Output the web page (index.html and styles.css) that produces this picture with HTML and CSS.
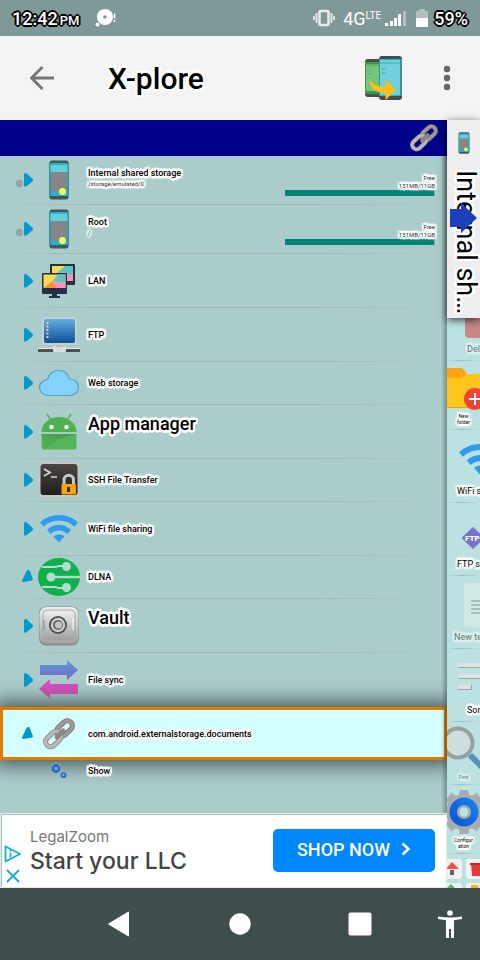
FILE: index.html
```html
<!DOCTYPE html>
<html lang="en">
<head>
<meta charset="utf-8">
<meta name="viewport" content="width=device-width, initial-scale=1">
<title>X-plore</title>
<link rel="stylesheet" href="styles.css">
</head>
<body>
<svg width="0" height="0" class="defs" aria-hidden="true">
  <defs>
    <linearGradient id="metal" x1="0" y1="0" x2="1" y2="1"><stop offset="0" stop-color="#d6d6d6"/><stop offset=".5" stop-color="#8a8482"/><stop offset="1" stop-color="#c4c0be"/></linearGradient>
    <linearGradient id="screen" x1="0" y1="0" x2="0" y2="1"><stop offset="0" stop-color="#62aee3"/><stop offset="1" stop-color="#0d4f97"/></linearGradient>
    <linearGradient id="term" x1="0" y1="0" x2="0" y2="1"><stop offset="0" stop-color="#4b4643"/><stop offset="1" stop-color="#1f1c1b"/></linearGradient>
    <linearGradient id="safe" x1="0" y1="0" x2="0" y2="1"><stop offset="0" stop-color="#f0f0f0"/><stop offset="1" stop-color="#9d9d9d"/></linearGradient>
    <linearGradient id="syncA" x1="0" y1="0" x2="0" y2="1"><stop offset="0" stop-color="#5b9be0"/><stop offset="1" stop-color="#7668bd"/></linearGradient>
    <linearGradient id="syncB" x1="0" y1="0" x2="0" y2="1"><stop offset="0" stop-color="#e445d4"/><stop offset="1" stop-color="#a9598f"/></linearGradient>
    <linearGradient id="ring" x1="0" y1="1" x2="1" y2="0"><stop offset="0" stop-color="#0b4fd0"/><stop offset="1" stop-color="#1b86f5"/></linearGradient>
    <symbol id="phone" viewBox="0 0 20 40">
      <rect x=".5" y=".5" width="19" height="39" rx="2.5" fill="#4a5355"/>
      <rect x="0" y="3" width="20" height="33" fill="#3e8e9a"/>
      <rect x="1.500" y="3" width="17" height="33" fill="#1fb4d2"/>
      <rect x="1.500" y="5" width="17" height="7" fill="#62cfdc"/>
      <rect x="2" y="12" width="16" height="20" fill="#868686"/>
      <circle cx="13.500" cy="31.500" r="3.500" fill="#eaff5e"/>
    </symbol>
    <symbol id="chain" viewBox="0 0 34 34">
      <g fill="none" stroke-linecap="round">
        <rect x="-9" y="-5" width="18" height="10" rx="5" transform="translate(22.500 11.500) rotate(-43)" stroke="#77716f" stroke-width="5"/>
        <rect x="-9" y="-5" width="18" height="10" rx="5" transform="translate(22.500 11.500) rotate(-43)" stroke="#9f9a98" stroke-width="3.400"/>
        <rect x="-9" y="-5" width="18" height="10" rx="5" transform="translate(11.500 22) rotate(-43)" stroke="#8b8785" stroke-width="5"/>
        <rect x="-9" y="-5" width="18" height="10" rx="5" transform="translate(11.500 22) rotate(-43)" stroke="#bcb8b6" stroke-width="3.400"/>
        <path d="M15 20l6-6" stroke="#8b8583" stroke-width="5"/>
      </g>
    </symbol>
    <symbol id="wifi" viewBox="0 0 38 28">
      <path d="M19 0C11.500 0 5 2.800 0 7.500l3.500 4C7.800 7.600 13 5.500 19 5.500s11.200 2.100 15.500 6l3.500-4C33 2.800 26.500 0 19 0zM19 10c-4.800 0-9 1.900-12 5l3.600 4c2.200-2.200 5-3.500 8.400-3.500s6.200 1.300 8.400 3.500l3.600-4c-3-3.100-7.200-5-12-5zM19 19.500c-2.100 0-4 .9-5.300 2.300L19 27.500l5.300-5.700c-1.300-1.400-3.200-2.300-5.300-2.300z" fill="#2e9bf3"/>
    </symbol>
    <symbol id="closed" viewBox="0 0 24 22">
      <path d="M10.800 4.200Q11.500 3.500 12.500 4.300L18.500 9.700Q19.600 11 18.500 12.200L12.500 17.200Q11.500 18 10.500 17.500Q10 17 10 16V6Q10 5 10.800 4.200z" fill="#0399cf"/>
    </symbol>
    <symbol id="open" viewBox="0 0 24 22">
      <path d="M12.500 5Q13.800 3.300 15.500 4.200L18.800 13Q19 14 18 14.400L9.500 16Q8 16 8 14.500z" fill="#0399cf"/>
    </symbol>
  </defs>
</svg>

<header class="status">
  <span class="clock">12:42<small>PM</small></span>
  <svg class="note" width="22" height="20" viewBox="0 0 22 20"><circle cx="10" cy="9" r="8" fill="#fff"/><circle cx="10" cy="9" r="1.800" fill="#7f9998"/><circle cx="2.500" cy="16.500" r="2" fill="#fff"/><path d="M19.500 5.500v5M19.500 12v2" stroke="#fff" stroke-width="1.500"/></svg>
  <svg class="vibrate" width="22" height="18" viewBox="0 0 22 18"><rect x="6.500" y="2" width="9" height="14" rx="1" fill="none" stroke="#e6ebeb" stroke-width="2.600"/><path d="M3.500 4v10M18.500 4v10M1 7v4M21 7v4" stroke="#e6ebeb" stroke-width="1.800"/></svg>
  <span class="net">4G<sup>LTE</sup></span>
  <svg class="signal" width="22" height="16" viewBox="0 0 22 16"><path d="M0 13h3v3H0zM5 11h3v5H5zM9 8h3v8H9zM13 4h3v12h-3z" fill="#fff"/><path d="M18 1h3v15h-3z" fill="#b1c0bf"/></svg>
  <svg class="battery" width="12" height="18" viewBox="0 0 12 18"><path d="M3 0h6v2h3v7H0V2h3z" fill="#b1c0bf"/><path d="M0 9h12v9H0z" fill="#fff"/></svg>
  <span class="percent">59%</span>
</header>

<div class="toolbar">
  <button class="plain back" aria-label="Back"><svg width="24" height="24" viewBox="0 0 24 24"><path d="M24 12H2M12.500 1L1.500 12l11 11" fill="none" stroke="#757575" stroke-width="2.800"/></svg></button>
  <h1>X-plore</h1>
  <button class="plain" aria-label="Switch pane">
    <svg width="38" height="44" viewBox="0 0 38 44"><rect x="0" y="3" width="22" height="38" rx="3" fill="#4b4f50"/><rect x="0" y="6" width="20" height="32" fill="#3c9a47"/><rect x="1" y="8" width="18" height="27" fill="#74c578"/><path d="M1 9h18" stroke="#3faa4b"/><rect x="14" y="0" width="23" height="44" rx="3" fill="#484e50"/><rect x="14" y="3" width="23" height="37" fill="#3e8f9d"/><rect x="15" y="3" width="20" height="37" fill="#20b3cd"/><rect x="15" y="4" width="20" height="35" fill="#6fd1dc"/><path d="M15 7h20" stroke="#27b6cf"/><path d="M2 14h2m1 0h1M2 18h4M17 13h3M17 17h3" stroke="#5aa" stroke-width="1.500"/><path d="M4.500 22c2 6 7 9.500 16 8.500v-7L31 34 20.500 44v-7C10 37 4 31.500 4.500 22z" fill="#ffbf14"/></svg>
  </button>
  <button class="plain more" aria-label="More options"><svg width="8" height="26" viewBox="0 0 8 26"><g fill="#666"><circle cx="4" cy="4" r="3.200"/><circle cx="4" cy="13" r="3.200"/><circle cx="4" cy="22" r="3.200"/></g></svg></button>
</div>

<main>
  <section class="pane">
    <div class="path"><svg width="30" height="30"><use href="#chain"/></svg></div>
    <ul class="list">
      <li class="row h49">
        <svg class="toggle" width="24" height="22"><circle cx="5.500" cy="14.500" r="3.700" fill="#97a5a4"/><use href="#closed"/></svg>
        <svg class="icon" width="42" height="40"><use href="#phone" x="11" width="20" height="40"/></svg>
        <div class="text"><b>Internal shared storage</b><small>/storage/emulated/0</small></div>
        <div class="space"><span>Free<br>151MB/11GB</span><div class="bar"><div class="fill" style="width:99%"></div></div></div>
      </li>
      <li class="row h49">
        <svg class="toggle" width="24" height="22"><circle cx="5.500" cy="14.500" r="3.700" fill="#97a5a4"/><use href="#closed"/></svg>
        <svg class="icon" width="42" height="40"><use href="#phone" x="11" width="20" height="40"/></svg>
        <div class="text"><b>Root</b><small>/</small></div>
        <div class="space"><span>Free<br>151MB/11GB</span><div class="bar"><div class="fill" style="width:99%"></div></div></div>
      </li>
      <li class="row">
        <svg class="toggle" width="24" height="22"><use href="#closed"/></svg>
        <svg class="icon" width="42" height="36" viewBox="0 0 42 36"><rect x="12" y="1" width="25" height="21" rx="1" fill="#22313f"/><path d="M14 3h21v13H14z" fill="#5fc4c6"/><path d="M14 3h13L14 14z" fill="#fbda51"/><path d="M24 9l11 3v6H24z" fill="#fd8fc4"/><rect x="4" y="10" width="25" height="21" rx="1" fill="#22304a"/><path d="M5.500 11.500h22V25h-22z" fill="#fbda51"/><path d="M20 11.500h7.500V20L14 18.500z" fill="#5fc4c6"/><path d="M14 18.500l13.500 1.500v5H19z" fill="#fd8fc4"/><path d="M14 18.500L19 25H5.500z" fill="#fb8c35"/><path d="M14 30h5v3h3v2H11v-2h3z" fill="#22304a"/></svg>
        <div class="text"><b>LAN</b></div>
      </li>
      <li class="row">
        <svg class="toggle" width="24" height="22"><use href="#closed"/></svg>
        <svg class="icon" width="42" height="36" viewBox="0 0 42 36"><path d="M0 31h42v1H0z" fill="#eee"/><path d="M0 32h42v3H0z" fill="#4c5151"/><rect x="15" y="29" width="13" height="6" rx="1" fill="#dcdcdc"/><path d="M18 26h7v4h-7z" fill="#bbb"/><rect x="4" y="0" width="35" height="28" rx="4" fill="#c7cfd1"/><rect x="6" y="2" width="31" height="24" rx="2" fill="url(#screen)"/><path d="M9.500 5v17" stroke="#ead9a1" stroke-width="1.800" stroke-dasharray="2 1.500"/></svg>
        <div class="text"><b>FTP</b></div>
      </li>
      <li class="row h43">
        <svg class="toggle" width="24" height="22"><use href="#closed"/></svg>
        <svg class="icon" width="42" height="28" viewBox="0 0 42 28"><path d="M10 26.500C4.500 26 1.500 22 1.500 18S5 11 9.500 10.500C11 5 15 1.500 20.500 1.500S30 4.500 31.500 10C37 10 40.500 14 40.500 18s-3 8-8 8.500z" fill="#82d2fb" stroke="#549ebf" stroke-width="1.200"/></svg>
        <div class="text"><b>Web storage</b></div>
      </li>
      <li class="row">
        <svg class="toggle" width="24" height="22"><use href="#closed"/></svg>
        <svg class="icon" width="42" height="38" viewBox="0 0 42 38"><path d="M9 1l4.500 7M33 1l-4.500 7" stroke="#5cb363" stroke-width="1.700"/><path d="M3.500 19C3.500 10 12 4 21 4s17.500 6 17.500 15z" fill="#4fb152"/><path d="M3.500 21h35v13a2.500 2.500 0 0 1-2.500 2.500H6A2.500 2.500 0 0 1 3.500 34z" fill="#55b558"/><path d="M3.500 21h35L20 26z" fill="#489f4c"/><path d="M3.500 21L20 26 6.500 36.500z" fill="#4bab50"/><circle cx="13.500" cy="14" r="2.200" fill="#fff"/><circle cx="28.500" cy="14" r="2.200" fill="#fff"/></svg>
        <div class="text big"><b>App manager</b></div>
      </li>
      <li class="row h43">
        <svg class="toggle" width="24" height="22"><use href="#closed"/></svg>
        <svg class="icon" width="42" height="36" viewBox="0 0 42 36"><rect x="1" y="0" width="40" height="35" rx="4" fill="#c9c5c2"/><rect x="2.500" y="2" width="37" height="31" rx="3" fill="url(#term)"/><path d="M6 7l6 3.500L6 14M13 15h6" fill="none" stroke="#d7d4cf" stroke-width="1.700"/><path d="M26 23v-5a4.700 4.700 0 0 1 9.500 0v5" fill="none" stroke="#c5c8cb" stroke-width="3"/><rect x="23.500" y="22" width="14.500" height="10.500" rx="1" fill="#f8a40e"/><path d="M29 25h3v5h-3z" fill="#332611"/></svg>
        <div class="text"><b>SSH File Transfer</b></div>
      </li>
      <li class="row">
        <svg class="toggle" width="24" height="22"><use href="#closed"/></svg>
        <svg class="icon" width="42" height="28"><use href="#wifi" x="2" width="38" height="28"/></svg>
        <div class="text"><b>WiFi file sharing</b></div>
      </li>
      <li class="row h43">
        <svg class="toggle" width="24" height="22"><use href="#open"/></svg>
        <svg class="icon" width="42" height="38" viewBox="0 0 42 38"><ellipse cx="21" cy="19" rx="21" ry="19" fill="#0fb14b"/><g fill="#b7d9d1"><circle cx="28.500" cy="8.500" r="4.500"/><circle cx="13" cy="19" r="4.500"/><circle cx="28.500" cy="29.500" r="4.500"/></g><path d="M4 9h13l4-1h8M4 29h13l4 1h8" fill="none" stroke="#b7d9d1" stroke-width="2.200"/><path d="M13 19h29" stroke="#b7d9d1" stroke-width="2.400"/></svg>
        <div class="text"><b>DLNA</b></div>
      </li>
      <li class="row">
        <svg class="toggle" width="24" height="22"><use href="#closed"/></svg>
        <svg class="icon" width="42" height="40" viewBox="0 0 42 40"><rect x="1" y=".5" width="40" height="39" rx="7" fill="#858b8b"/><rect x="1.500" y="1" width="39" height="37" rx="7" fill="url(#safe)"/><rect x="5" y="4" width="32" height="31" rx="4" fill="url(#safe)" stroke="#aaa"/><circle cx="20" cy="19" r="9" fill="#4b4f50"/><circle cx="20" cy="19" r="7.200" fill="#d0d0d0"/><circle cx="20" cy="19" r="5" fill="#626666"/><circle cx="20.500" cy="19" r="3.600" fill="#c4c4c4"/><path d="M35 12v12" stroke="#fff"/><path d="M6 14v10" stroke="#888"/></svg>
        <div class="text big"><b>Vault</b></div>
      </li>
      <li class="row last">
        <svg class="toggle" width="24" height="22"><use href="#closed"/></svg>
        <svg class="icon" width="42" height="40" viewBox="0 0 42 40"><path d="M2 5h27V0l11 10-11 10v-5H2z" fill="url(#syncA)"/><path d="M40 24H12v-5L1 29l11 10v-5h28z" fill="url(#syncB)"/></svg>
        <div class="text"><b>File sync</b></div>
      </li>
      <li class="row selected">
        <svg class="toggle" width="24" height="22"><use href="#open"/></svg>
        <svg class="icon" width="42" height="34"><use href="#chain" x="4" width="34" height="34"/></svg>
        <div class="text"><b>com.android.externalstorage.documents</b></div>
      </li>
      <li class="row child">
        <span class="toggle"></span>
        <svg class="icon" width="42" height="20" viewBox="0 0 42 20"><g fill="none"><circle cx="18" cy="7.500" r="4.800" stroke="#a6a6a6" stroke-width="2" stroke-dasharray="2 1.500"/><circle cx="18" cy="7.500" r="3.200" stroke="#1669dc" stroke-width="2.400"/><circle cx="25.500" cy="14" r="3.300" stroke="#a6a6a6" stroke-width="1.500" stroke-dasharray="1.500 1"/><circle cx="25.500" cy="14" r="2" stroke="#1669dc" stroke-width="1.700"/></g></svg>
        <div class="text"><b>Show</b></div>
      </li>
    </ul>
    <aside class="ad">
      <div class="marks">
        <svg width="18" height="18" viewBox="0 0 18 18"><path d="M1.500 1.500L16 9 1.500 16.500z" fill="none" stroke="#0fb0cc" stroke-width="1.800" stroke-linejoin="round"/><path d="M6.500 7.500v5M6.500 5v1.500" stroke="#0fb0cc" stroke-width="1.700"/></svg>
        <svg width="16" height="16" viewBox="0 0 16 16"><path d="M2 2l12 12M14 2L2 14" stroke="#0fb0cc" stroke-width="1.800"/></svg>
      </div>
      <div class="copy"><span>LegalZoom</span><strong>Start your LLC</strong></div>
      <button class="shop">SHOP NOW<svg width="10" height="14" viewBox="0 0 10 14"><path d="M1.500 1.500L7.500 7l-6 5.500" fill="none" stroke="#fff" stroke-width="2.600"/></svg></button>
    </aside>
  </section>

  <section class="side">
    <button class="tab">
      <svg width="12" height="22"><use href="#phone" width="12" height="22"/></svg>
      <span>Internal sh…</span>
      <svg class="jump" width="28" height="30" viewBox="0 0 28 30"><path d="M0 6h11V0l16 15-16 15v-6H0z" fill="#1d3fbb"/></svg>
    </button>
    <button class="item faded"><svg width="33" height="24" viewBox="0 0 33 24"><path d="M18 0h15v20H22a4 4 0 0 1-4-4z" fill="#d7201f" fill-opacity=".9"/></svg><span class="in20">Del</span></button>
    <button class="item"><svg width="33" height="52" viewBox="0 0 33 52"><path d="M0 7h15l4 4v6H0z" fill="#fda414"/><path d="M0 17h15l4-4h14v34H0z" fill="#fec51c"/><path d="M0 46h33v1H0z" fill="#e0a414"/><circle cx="28" cy="38" r="11" fill="#f44336"/><path d="M28 32v12M22 38h12" stroke="#fff" stroke-width="2"/></svg><span class="tiny">New<br>folder</span></button>
    <button class="item"><svg width="33" height="54" viewBox="0 0 33 54"><use href="#wifi" x="12" y="14" width="42" height="31"/></svg><span class="in10">WiFi s</span></button>
    <button class="item"><svg width="33" height="54" viewBox="0 0 33 54"><path d="M26 24.500l11 10.500-11 10.500L15 35z" fill="#7573c8" stroke="#7573c8" stroke-linejoin="round"/><text x="18" y="38" class="mark">FTP</text></svg><span class="in10">FTP s</span></button>
    <button class="item faded"><svg width="33" height="54" viewBox="0 0 33 54"><path d="M20 7h13v44H20a3 3 0 0 1-3-3V10a3 3 0 0 1 3-3z" fill="#eee"/><path d="M24 25h9M24 29h9M24 33h9M24 37h9" stroke="#999" stroke-width="2"/></svg><span class="in7">New te</span></button>
    <button class="item"><svg width="33" height="54" viewBox="0 0 33 54"><path d="M11 14h22v5H11zM11 25h22v5H11zM11 36h14v5H11z" fill="#9aa5a5"/><path d="M11 14h22v4H11zM11 25h22v4H11zM11 36h13v4H11z" fill="#e1e1e1"/></svg><span class="in20">Sor</span></button>
    <button class="item"><svg width="33" height="52" viewBox="0 0 33 52"><path d="M23 33l12 12" stroke="#5591b8" stroke-width="6"/><circle cx="11" cy="21" r="14.500" fill="#cddfde" stroke="#95a3a1" stroke-width="4"/></svg><span class="tiny dim">Find</span></button>
    <button class="item"><svg width="33" height="52" viewBox="0 0 33 52"><g fill="#a9adaf"><circle cx="17" cy="27" r="18"/><path d="M13 5h8l2 8H11zM11 41h12l-2 8h-8z"/><path d="M-1 15l5-7 9 5-8 11zM35 15l-5-7-9 5 8 11zM-1 39l5 7 9-5-8-11zM35 39l-5 7-9-5 8-11z"/></g><circle cx="17" cy="27" r="14.500" fill="url(#ring)"/><circle cx="17" cy="27" r="7" fill="#a4adb3"/><circle cx="17" cy="27" r="4.500" fill="#bbe1e0"/></svg><span class="tiny">Configur<br>ation</span></button>
    <div class="keys">
      <button aria-label="Home"><svg width="20" height="20" viewBox="0 0 20 20"><path d="M10 3L4 10h13z" fill="#fb4a3e"/><path d="M8 11h4v5H8z" fill="#69615e"/></svg></button>
      <button aria-label="Delete"><svg width="20" height="20" viewBox="0 0 20 20"><path d="M5 4h12v13H6z" fill="#e53935"/><path d="M4 4h13v2H4z" fill="#c62828"/></svg></button>
      <button aria-label="Up"><svg width="20" height="20" viewBox="0 0 20 20"><path d="M9 1l4 4H5z" fill="#5ab55e"/></svg></button>
      <button aria-label="Folder"><svg width="20" height="20" viewBox="0 0 20 20"><path d="M5 2h6l2 2v6H5z" fill="#ffb31a"/></svg></button>
    </div>
  </section>
</main>

<nav class="nav">
  <button class="plain" aria-label="Back"><svg width="24" height="26" viewBox="0 0 24 26"><path d="M20.500 1v24L.5 13z" fill="#fff" stroke="#fff" stroke-linejoin="round"/></svg></button>
  <button class="plain" aria-label="Home"><svg width="24" height="24" viewBox="0 0 24 24"><circle cx="12" cy="12" r="10.700" fill="#fff"/></svg></button>
  <button class="plain" aria-label="Recent apps"><svg width="24" height="24" viewBox="0 0 24 24"><rect x=".5" y=".5" width="23" height="23" rx="2" fill="#fff"/></svg></button>
  <button class="plain access" aria-label="Accessibility"><svg width="24" height="28" viewBox="0 0 24 28"><circle cx="12" cy="3" r="2.800" fill="#fff"/><path d="M0 6.500q12 2 24 0v2.500l-8 1.200V28h-3v-9h-2v9H8V10.200L0 9z" fill="#fff"/></svg></button>
</nav>
</body>
</html>
```
FILE: styles.css
```css
:root {
  --teal: #aacccb;
  --side: #bbe1e0;
  --halo: 1px 0 #fff, -1px 0 #fff, 0 1px #fff, 0 -1px #fff, 2px 2px #fff, -2px -2px #fff, 2px -2px #fff, -2px 2px #fff, 2px 0 #fff, -2px 0 #fff, 0 2px #fff, 0 -2px #fff, 0 3px 1px #fff, 0 -3px 1px #fff;
  --edge: 1px 0 #000, -1px 0 #000, 0 1px #000, 0 -1px #000, 1px 1px #000, -1px -1px #000, 1px -1px #000, -1px 1px #000, 2px 0 #000, -2px 0 #000, 0 2px #000, 0 -2px #000;
}

* { box-sizing: border-box; }

body {
  margin: 0;
  height: 100vh;
  display: flex;
  flex-direction: column;
  overflow: hidden;
  font-family: Roboto, sans-serif;
  color: #000;
  background: var(--teal);
}

svg { display: block; flex: none; }
.defs { position: absolute; }
button { font-family: inherit; border: 0; padding: 0; margin: 0; color: inherit; }
.plain { background: none; display: flex; align-items: center; justify-content: center; }

.status {
  height: 36px;
  flex: none;
  display: flex;
  align-items: center;
  padding: 0 12px;
  background: #7f9998;
  color: #fff;
}
.clock, .percent { font-size: 18px; font-weight: 500; text-shadow: var(--edge); }
.clock small { font-size: 13px; margin-left: 2px; }
.note { margin-left: 16px; }
.vibrate { margin-left: auto; }
.net { font-size: 18px; margin-left: 8px; }
.net sup { font-size: 10px; vertical-align: 6px; line-height: 1; }
.signal { margin-left: 4px; }
.battery { margin: 0 6px 0 9px; }

.toolbar {
  height: 84px;
  flex: none;
  display: flex;
  align-items: center;
  padding: 0 29px 0 30px;
  background: #f4f4f4;
}
.toolbar h1 {
  flex: 1;
  margin: 0 0 0 54px;
  font-size: 30px;
  font-weight: 500;
  text-shadow: var(--halo);
}
.more { margin-left: 40px; }

main { flex: 1; min-height: 0; display: flex; }

.pane {
  flex: 1;
  min-width: 0;
  display: flex;
  flex-direction: column;
  overflow: hidden;
  position: relative;
}
.pane::after {
  content: "";
  position: absolute;
  inset: 36px 0 75px auto;
  width: 6px;
  background: linear-gradient(to right, transparent, rgba(0, 0, 0, .3));
}
.path {
  height: 36px;
  flex: none;
  display: flex;
  align-items: center;
  justify-content: flex-end;
  padding-right: 8px;
  background: #00008b;
}

.list {
  flex: 1;
  min-height: 0;
  margin: 0;
  padding: 0;
  list-style: none;
  display: flex;
  flex-direction: column;
  background: var(--teal);
}
.row {
  height: 54px;
  flex: none;
  z-index: 1;
  display: flex;
  align-items: center;
  padding-left: 14px;
  background: linear-gradient(to right, transparent, #a3b6b6 20%, #a3b6b6 70%, transparent) bottom / 100% 1px no-repeat;
}
.h49 { height: 49px; padding-bottom: 1px; }
.h43 { height: 43px; padding-bottom: 1px; }
.toggle { width: 24px; flex: none; }
.text { flex: 1; margin-left: 8px; display: flex; flex-direction: column; text-shadow: var(--halo); }
.text b { font-size: 9px; line-height: 12px; font-weight: 500; }
.text small { font-size: 6px; line-height: 10px; color: #333; }
.h49 .text { padding-bottom: 4px; }
.text.big { padding-bottom: 16px; }
.big b { font-size: 18px; line-height: 22px; }

.space {
  width: 150px;
  margin-right: 12px;
  padding-bottom: 8px;
  align-self: flex-end;
  text-align: right;
  font-size: 6px;
  line-height: 8px;
  color: #333;
  text-shadow: var(--halo);
}
.space span { display: block; }
.bar { height: 6px; background: #97a5a4; }
.fill { height: 6px; background: #008577; }

.row.last { background: none; }
.row.selected {
  height: 53px;
  z-index: 0;
  padding-left: 11px;
  border: 3px solid #e07b00;
  background: #d4ffff;
  box-shadow: 0 0 18px 6px rgba(0, 0, 0, .55);
}
.row.child { height: 22px; background: none; }

.ad {
  height: 75px;
  flex: none;
  z-index: 1;
  display: flex;
  align-items: center;
  padding-right: 11px;
  border: 1px solid #e4eaea;
  box-shadow: inset 1px 1px #a4c4c4;
  background: #fff;
}
.marks { width: 24px; margin: 28px 5px 0 0; display: flex; flex-direction: column; align-items: center; gap: 5px; }
.copy { flex: 1; display: flex; flex-direction: column; font-family: Inter, sans-serif; }
.copy span { font-size: 15px; line-height: 20px; color: #777; }
.copy strong { font-size: 23px; line-height: 28px; font-weight: 500; color: #444; }
.shop {
  width: 162px;
  height: 43px;
  display: flex;
  align-items: center;
  justify-content: center;
  gap: 11px;
  padding-bottom: 3px;
  border-radius: 5px;
  background: #0088ff;
  color: #fff;
  font-size: 18px;
  font-weight: 500;
}

.side {
  width: 33px;
  flex: none;
  display: flex;
  flex-direction: column;
  background: var(--side);
}
.tab {
  position: relative;
  height: 198px;
  flex: none;
  z-index: 1;
  display: flex;
  flex-direction: column;
  align-items: center;
  padding-top: 12px;
  background: #eee;
  box-shadow: 0 2px 8px rgba(0, 0, 0, .7);
}
.tab span {
  margin: 16px 0 0 4px;
  writing-mode: vertical-rl;
  font-size: 27px;
  line-height: 32px;
  white-space: nowrap;
  text-shadow: var(--halo);
}
.jump { position: absolute; left: 3px; top: 83px; }

.item {
  flex: none;
  display: flex;
  flex-direction: column;
  padding-bottom: 5px;
  overflow: hidden;
  font-size: 9px;
  line-height: 14px;
  text-align: left;
  white-space: nowrap;
  background: linear-gradient(to right, transparent, #9fbdbc 40%, transparent) bottom / 100% 1px no-repeat;
  text-shadow: var(--halo);
}
.faded > * { opacity: .5; }
.in7 { margin-left: 7px; }
.in10 { margin-left: 10px; }
.in20 { margin-left: 20px; }
.tiny { align-self: center; font-size: 5px; line-height: 6px; text-align: center; }
.dim { opacity: .5; }
.mark { font-size: 8px; font-weight: 900; fill: #fff; text-shadow: none; }

.keys {
  flex: 1 1 0;
  min-height: 0;
  overflow: hidden;
  display: grid;
  grid-template-columns: 20px 20px;
  grid-auto-rows: 20px;
  gap: 4px;
  margin-left: -5px;
  padding-top: 5px;
}
.keys button { border-radius: 3px; background: #f2f2f2; }

.nav {
  height: 72px;
  flex: none;
  display: grid;
  grid-template-columns: 2fr 2fr 2fr 1fr;
  padding-left: 12.5%;
  background: #3f4d4c;
}
```
